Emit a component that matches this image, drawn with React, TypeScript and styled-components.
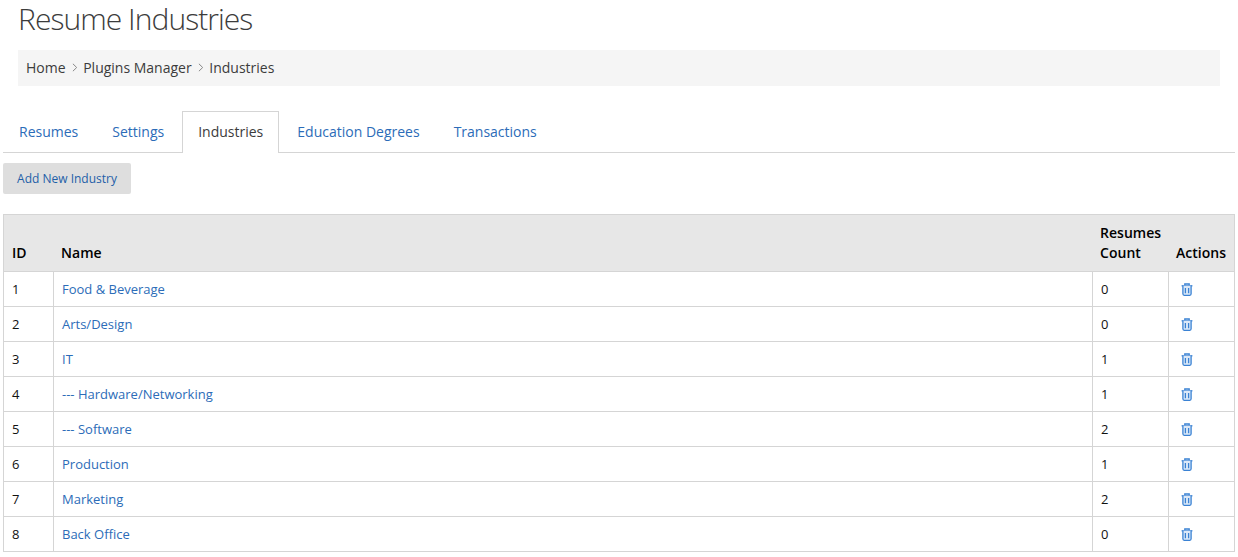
import React from 'react';
import styled, { createGlobalStyle } from 'styled-components';

const GlobalStyle = createGlobalStyle`
  html, body {
    margin: 0;
    padding: 0;
    background: #ffffff;
    font-family: 'Open Sans', 'Liberation Sans', Arial, sans-serif;
    font-size: 13px;
    color: #222222;
  }
`;

const Page = styled.div`
  width: 1238px;
  height: 557px;
  padding: 0 3px;
  box-sizing: border-box;
  overflow: hidden;
`;

const Title = styled.h1`
  margin: 0 0 0 15px;
  height: 50px;
  line-height: 37px;
  font-size: 30px;
  font-weight: 300;
  letter-spacing: -0.95px;
  color: #3c3c3c;
`;

const Breadcrumb = styled.nav`
  display: flex;
  align-items: center;
  gap: 6px;
  height: 36px;
  margin: 0 15px;
  padding: 0 8px 2px;
  box-sizing: border-box;
  background: #f5f5f5;
  font-size: 14px;
  color: #3c3c3c;
`;

const Chevron = styled.svg`
  width: 5.6px;
  height: 9px;
  margin-top: 1px;
  fill: none;
  stroke: #888888;
  stroke-width: 1;
`;

const Tabs = styled.div`
  display: flex;
  align-items: flex-start;
  height: 42px;
  margin-top: 25px;
  border-bottom: 1px solid #d5d5d5;
  box-sizing: border-box;
`;

const Tab = styled.a<{ $active?: boolean }>`
  display: flex;
  align-items: center;
  height: ${p => (p.$active ? '42px' : '41px')};
  margin-right: 2px;
  padding: 0 15px ${p => (p.$active ? '3px' : '2px')};
  box-sizing: border-box;
  font-size: 14px;
  color: ${p => (p.$active ? '#3c3c3c' : '#2c6cb8')};
  background: ${p => (p.$active ? '#ffffff' : 'transparent')};
  border: 1px solid ${p => (p.$active ? '#d5d5d5' : 'transparent')};
  border-bottom: none;
`;

const AddButton = styled.button`
  display: block;
  width: 128px;
  height: 31px;
  margin: 10px 0 20px;
  padding: 0;
  border: none;
  border-radius: 2px;
  background: #dedede;
  font-family: inherit;
  font-size: 12px;
  color: #1f5fa8;
`;

const Table = styled.table`
  width: 1232px;
  border-collapse: collapse;
  table-layout: fixed;
`;

const HeadCell = styled.th`
  padding: 0 8px 8px 7.6px;
  height: 57px;
  box-sizing: border-box;
  background: #e7e7e7;
  border-top: 1px solid #d5d5d5;
  border-bottom: 1px solid #d5d5d5;
  text-align: left;
  vertical-align: bottom;
  font-size: 14px;
  font-weight: 600;
  line-height: 20px;
  color: #000000;
  &:first-child {
    padding-left: 8px;
    border-left: 1px solid #d5d5d5;
  }
  &:last-child { border-right: 1px solid #d5d5d5; }
`;

const Cell = styled.td`
  height: 35px;
  padding: 0 8px;
  box-sizing: border-box;
  border: 1px solid #d5d5d5;
  font-size: 13px;
  color: #111111;
`;

const NameLink = styled.a`
  color: #2c6cb8;
`;

const TrashIcon = styled.svg`
  display: block;
  width: 12px;
  height: 13px;
  margin-left: 4px;
  fill: none;
  stroke: #3a82d4;
  stroke-width: 1.3;
`;

const Trash = () => (
  <TrashIcon viewBox="0 0 12 13">
    <path d="M0.6 2.8h10.8" />
    <path d="M3.8 2.6V1h4.4v1.6" />
    <path d="M1.9 2.8v8c0 .9.5 1.5 1.3 1.5h5.6c.8 0 1.3-.6 1.3-1.5v-8" fill="#dbe8f8" />
    <path d="M4.4 5v5.2M7.6 5v5.2" />
  </TrashIcon>
);

const rows = [
  { id: 1, name: 'Food & Beverage', count: 0 },
  { id: 2, name: 'Arts/Design', count: 0 },
  { id: 3, name: 'IT', count: 1 },
  { id: 4, name: '--- Hardware/Networking', count: 1 },
  { id: 5, name: '--- Software', count: 2 },
  { id: 6, name: 'Production', count: 1 },
  { id: 7, name: 'Marketing', count: 2 },
  { id: 8, name: 'Back Office', count: 0 },
];

const Sep = () => (
  <Chevron viewBox="0 0 5 9">
    <path d="M.6 .8 4.4 4.5 .6 8.2" />
  </Chevron>
);

export default function App() {
  return (
    <Page>
      <GlobalStyle />
      <Title>Resume Industries</Title>
      <Breadcrumb>
        <span>Home</span>
        <Sep />
        <span>Plugins Manager</span>
        <Sep />
        <span>Industries</span>
      </Breadcrumb>
      <Tabs>
        <Tab>Resumes</Tab>
        <Tab>Settings</Tab>
        <Tab $active>Industries</Tab>
        <Tab>Education Degrees</Tab>
        <Tab>Transactions</Tab>
      </Tabs>
      <AddButton>Add New Industry</AddButton>
      <Table>
        <colgroup>
          <col style={{ width: 50 }} />
          <col />
          <col style={{ width: 76 }} />
          <col style={{ width: 66 }} />
        </colgroup>
        <thead>
          <tr>
            <HeadCell>ID</HeadCell>
            <HeadCell>Name</HeadCell>
            <HeadCell>Resumes Count</HeadCell>
            <HeadCell>Actions</HeadCell>
          </tr>
        </thead>
        <tbody>
          {rows.map(row => (
            <tr key={row.id}>
              <Cell>{row.id}</Cell>
              <Cell>
                <NameLink>{row.name}</NameLink>
              </Cell>
              <Cell>{row.count}</Cell>
              <Cell>
                <Trash />
              </Cell>
            </tr>
          ))}
        </tbody>
      </Table>
    </Page>
  );
}
